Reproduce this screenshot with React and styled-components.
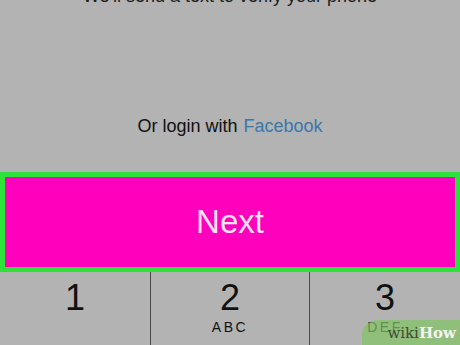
import styled, { createGlobalStyle } from "styled-components";

const Global = createGlobalStyle`
  html, body {
    margin: 0;
    padding: 0;
    background: #b3b3b3;
  }
  body {
    font-family: "Liberation Sans", Arial, sans-serif;
  }
`;

const Screen = styled.div`
  width: 460px;
  height: 345px;
  overflow: hidden;
  background: #b3b3b3;
  display: flex;
  flex-direction: column;
  position: relative;
`;

const Hint = styled.p`
  margin: -14px 0 0;
  height: 20px;
  font-size: 18px;
  line-height: 20px;
  text-align: center;
  color: #1c1c1c;
`;

const LoginLine = styled.div`
  margin-top: 111px;
  height: 18px;
  display: flex;
  justify-content: center;
  align-items: center;
  gap: 6px;
  font-size: 18px;
  color: #111;
`;

const Link = styled.span`
  color: #3a77ab;
`;

const NextBar = styled.button`
  margin-top: 37px;
  height: 100px;
  width: 460px;
  flex-shrink: 0;
  border: 5px solid #2ee23c;
  background: #ff00bd;
  color: #fbe3f4;
  font-family: "Liberation Sans", Arial, sans-serif;
  font-size: 33px;
  display: flex;
  align-items: center;
  justify-content: center;
  padding: 0;
`;

const Keypad = styled.div`
  flex: 1;
  display: grid;
  grid-template-columns: 150px 159px 1fr;
`;

const Key = styled.div`
  display: flex;
  flex-direction: column;
  align-items: center;
  padding-top: 6px;
  border-left: ${(p) => (p.$first ? "none" : "1.5px solid #4a4a4a")};
`;

const Digit = styled.span`
  font-size: 36px;
  line-height: 40px;
  color: #111;
`;

const Letters = styled.span`
  font-size: 14px;
  letter-spacing: 2.5px;
  margin-top: 1px;
  color: #111;
`;

const Watermark = styled.div`
  position: absolute;
  right: 0;
  bottom: 0;
  width: 98px;
  height: 25px;
  border-top-left-radius: 18px 14px;
  background: rgba(130, 195, 100, 0.7);
  display: flex;
  align-items: center;
  justify-content: flex-end;
  padding-right: 4px;
  box-sizing: border-box;
  font-family: "DejaVu Serif", "Liberation Serif", serif;
  font-weight: bold;
  font-size: 15px;
  color: #f4f4f4;
`;

const Wiki = styled.span`
  color: #3d4a35;
  font-weight: normal;
`;

const keys = [
  { d: "1", l: "" },
  { d: "2", l: "ABC" },
  { d: "3", l: "DEF" },
];

export default function App() {
  return (
    <>
      <Global />
      <Screen>
        <Hint>We'll send a text to verify your phone</Hint>
        <LoginLine>
          Or login with <Link>Facebook</Link>
        </LoginLine>
        <NextBar>Next</NextBar>
        <Keypad>
          {keys.map((k, i) => (
            <Key key={k.d} $first={i === 0}>
              <Digit>{k.d}</Digit>
              <Letters>{k.l}</Letters>
            </Key>
          ))}
        </Keypad>
        <Watermark>
          <Wiki>wiki</Wiki>How
        </Watermark>
      </Screen>
    </>
  );
}
